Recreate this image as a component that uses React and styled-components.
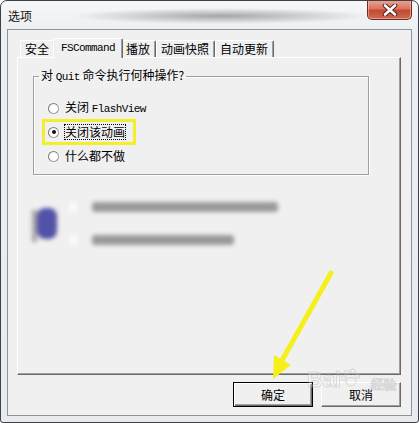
import React from "react";
import styled, { createGlobalStyle } from "styled-components";

const Global = createGlobalStyle`
  html, body { margin: 0; padding: 0; background: #ffffff; }
  body {
    font-family: "Noto Sans CJK SC", "Liberation Sans", sans-serif;
    font-size: 12px;
    color: #000;
  }
  * { box-sizing: border-box; }
`;

const Window = styled.div`
  position: relative;
  width: 419px;
  height: 423px;
  border: 1px solid #3d4046;
  border-radius: 7px 7px 3px 3px;
  overflow: hidden;
  display: flex;
  flex-direction: column;
  background:
    radial-gradient(ellipse 150px 8px at 220px 15px, rgba(140, 140, 140, 0.75), rgba(140, 140, 140, 0) 100%),
    linear-gradient(#f6f7f9 0%, #eceff2 30px, #e8ebee 100%);
`;

const TitleBar = styled.div`
  height: 28px;
  flex: none;
  display: flex;
  align-items: flex-start;
  justify-content: space-between;
  padding: 0 6px 0 7px;
`;

const Title = styled.div`
  margin-top: 8px;
  font-size: 12px;
  line-height: 14px;
  color: #111;
`;

const CloseButton = styled.div`
  margin-top: -1px;
  width: 45px;
  height: 20px;
  border: 1px solid #6e2b22;
  border-top: none;
  border-radius: 0 0 5px 5px;
  background: linear-gradient(#e9a796 0%, #d9755f 45%, #c24a33 55%, #cf6a52 100%);
  box-shadow: inset 0 0 0 1px rgba(255, 220, 210, 0.45);
  display: flex;
  align-items: center;
  justify-content: center;
`;

const Client = styled.div`
  flex: 1;
  margin: 0 6px 6px 6px;
  border: 1px solid #8f9398;
  background: #f0f0f0;
  display: flex;
  flex-direction: column;
  padding: 8px 10px 8px 9px;
`;

const TabStrip = styled.div`
  height: 19px;
  flex: none;
  display: flex;
  align-items: flex-end;
  padding-left: 3px;
  position: relative;
  z-index: 1;
`;

const Tab = styled.div`
  position: relative;
  height: ${(p) => (p.$active ? "20px" : "17px")};
  margin: ${(p) => (p.$active ? "0 -2px -1px -2px" : "0")};
  padding: ${(p) => (p.$active ? "3px 7px 0 7px" : "2px 5px 0 4px")};
  z-index: ${(p) => (p.$active ? 2 : 1)};
  background: #f0f0f0;
  border-top: 1px solid #ffffff;
  border-left: 1px solid #ffffff;
  border-right: 1px solid #696969;
  border-radius: 2px 2px 0 0;
  box-shadow: inset -1px 0 0 #a0a0a0;
  display: flex;
  align-items: flex-start;
  line-height: 12px;
  white-space: nowrap;
`;

const Mono = styled.span`
  font-family: "Liberation Mono", "DejaVu Sans Mono", monospace;
  font-size: 11px;
  letter-spacing: -0.6px;
`;

const Panel = styled.div`
  flex: 1;
  background: #f0f0f0;
  border-top: 1px solid #ffffff;
  border-left: 1px solid #ffffff;
  border-right: 1px solid #696969;
  border-bottom: 1px solid #696969;
  box-shadow: inset -1px -1px 0 #a0a0a0;
  display: flex;
  flex-direction: column;
  padding: 11px 31px 0 15px;
`;

const Group = styled.fieldset`
  margin: 0;
  padding: 0 0 6px 5px;
  border: 1px solid #a0a0a0;
  box-shadow: inset 1px 1px 0 #ffffff, 1px 1px 0 #ffffff;
  min-width: 0;
`;

const Legend = styled.legend`
  padding: 0 2px;
  line-height: 12px;
  font-size: 12px;
`;

const Options = styled.div`
  display: flex;
  flex-direction: column;
  padding: 13px 0 0 9px;
`;

const Option = styled.label`
  position: relative;
  height: 24px;
  display: flex;
  align-items: center;
  align-self: flex-start;
  gap: 5px;
  line-height: 12px;

  ${(p) =>
    p.$marked &&
    `
    &::after {
      content: "";
      position: absolute;
      top: -1px;
      bottom: -1px;
      left: -6px;
      right: -10px;
      border: 3px solid #f2ef2a;
      pointer-events: none;
    }
  `}
`;

const RadioDot = styled.span`
  width: 11px;
  height: 11px;
  border-radius: 50%;
  border: 1px solid #9c9c9c;
  border-top-color: #7e7e7e;
  border-left-color: #7e7e7e;
  background: radial-gradient(circle at 60% 60%, #ffffff 0%, #ffffff 50%, #e6e6e6 100%);
  box-shadow: 0 0 0 1px #f6f6f6;
  display: flex;
  align-items: center;
  justify-content: center;

  &::before {
    content: "";
    width: 4px;
    height: 4px;
    border-radius: 50%;
    background: ${(p) => (p.$checked ? "#111" : "transparent")};
  }
`;

const OptionText = styled.span`
  padding: 1px 0;
  border: 1px dotted ${(p) => (p.$focused ? "#000" : "transparent")};
  white-space: nowrap;
`;

/* obscured settings block under the group box */
const HiddenBlock = styled.div`
  margin-top: 20px;
  margin-left: -1px;
  height: 56px;
  display: flex;
  align-items: center;
  filter: blur(2px);
`;

const Handle = styled.div`
  width: 5px;
  height: 32px;
  margin-top: 6px;
  background: #a4a4a4;
`;

const Blob = styled.div`
  width: 20px;
  height: 31px;
  border-radius: 8px;
  background: #5252a8;
`;

const HiddenRows = styled.div`
  display: flex;
  flex-direction: column;
  gap: 23px;
  margin-left: 12px;
`;

const HiddenRow = styled.div`
  display: flex;
  align-items: center;
  gap: 15px;
`;

const HiddenBox = styled.div`
  width: 8px;
  height: 10px;
  background: #fafafa;
`;

const HiddenText = styled.div`
  width: ${(p) => p.$w}px;
  height: 10px;
  border-radius: 3px;
  background: #999999;
`;

const ButtonRow = styled.div`
  flex: none;
  margin-top: 7px;
  display: flex;
  justify-content: flex-end;
  gap: 8px;
`;

const Button = styled.div`
  width: 80px;
  height: 25px;
  display: flex;
  align-items: center;
  justify-content: center;
  background: #f0f0f0;
  line-height: 12px;
  ${(p) =>
    p.$default
      ? `
    border: 1px solid #000;
    box-shadow: inset 1px 1px 0 #ffffff, inset -1px -1px 0 #696969, inset -2px -2px 0 #a0a0a0;
  `
      : `
    border-top: 1px solid #ffffff;
    border-left: 1px solid #ffffff;
    border-right: 1px solid #696969;
    border-bottom: 1px solid #696969;
    box-shadow: inset -1px -1px 0 #a0a0a0;
  `}
`;

const Watermark = styled.div`
  position: absolute;
  left: 306px;
  top: 366px;
  display: flex;
  align-items: flex-end;
  pointer-events: none;
  opacity: 0.4;
`;

const WatermarkWord = styled.span`
  font-family: "Liberation Sans", sans-serif;
  font-weight: bold;
  font-size: ${(p) => p.$size}px;
  margin-left: ${(p) => p.$gap || 0}px;
  line-height: 1;
  color: rgba(255, 255, 255, 0.7);
  -webkit-text-stroke: 1px #b5b5b5;
`;

const Overlay = styled.svg`
  position: absolute;
  left: -1px;
  top: -1px;
  pointer-events: none;
`;

function CloseGlyph() {
  return (
    <svg width="16" height="12" viewBox="0 0 16 12">
      <path d="M3 1.5 L13 10.5 M13 1.5 L3 10.5" stroke="#5a1e16" strokeWidth="4.6" strokeLinecap="round" />
      <path d="M3 1.5 L13 10.5 M13 1.5 L3 10.5" stroke="#ffffff" strokeWidth="2.6" strokeLinecap="round" />
    </svg>
  );
}

function Paw() {
  return (
    <svg width="20" height="24" viewBox="0 0 22 24">
      <g fill="none" stroke="#b5b5b5" strokeWidth="1.3">
        <circle cx="6" cy="5" r="2.6" />
        <circle cx="13" cy="3.5" r="2.6" />
        <circle cx="3" cy="11" r="2.4" />
        <circle cx="18" cy="9" r="2.4" />
        <ellipse cx="11" cy="15" rx="5.5" ry="4.5" />
      </g>
    </svg>
  );
}

const tabs = [
  { key: "safe", label: "安全" },
  { key: "fs", label: <Mono>FSCommand</Mono>, active: true },
  { key: "play", label: "播放" },
  { key: "snap", label: "动画快照" },
  { key: "update", label: "自动更新" },
];

export default function App() {
  return (
    <>
      <Global />
      <Window>
        <TitleBar>
          <Title>选项</Title>
          <CloseButton>
            <CloseGlyph />
          </CloseButton>
        </TitleBar>
        <Client>
          <TabStrip>
            {tabs.map((t) => (
              <Tab key={t.key} $active={t.active}>
                {t.label}
              </Tab>
            ))}
          </TabStrip>
          <Panel>
            <Group>
              <Legend>
                对 <Mono>Quit</Mono> 命令执行何种操作?
              </Legend>
              <Options>
                <Option>
                  <RadioDot />
                  <OptionText>
                    关闭 <Mono>FlashView</Mono>
                  </OptionText>
                </Option>
                <Option $marked>
                  <RadioDot $checked />
                  <OptionText $focused>关闭该动画</OptionText>
                </Option>
                <Option>
                  <RadioDot />
                  <OptionText>什么都不做</OptionText>
                </Option>
              </Options>
            </Group>
            <HiddenBlock>
              <Handle />
              <Blob />
              <HiddenRows>
                <HiddenRow>
                  <HiddenBox />
                  <HiddenText $w={186} />
                </HiddenRow>
                <HiddenRow>
                  <HiddenBox />
                  <HiddenText $w={142} />
                </HiddenRow>
              </HiddenRows>
            </HiddenBlock>
          </Panel>
          <ButtonRow>
            <Button $default>确定</Button>
            <Button>取消</Button>
          </ButtonRow>
        </Client>
        <Watermark>
          <WatermarkWord $size={22}>Bai</WatermarkWord>
          <Paw />
          <WatermarkWord $size={13} $gap={10}>经验</WatermarkWord>
        </Watermark>
        <Overlay width="419" height="423" viewBox="0 0 419 423">
          <line x1="331" y1="273" x2="280" y2="364" stroke="#f5ef1c" strokeWidth="5" strokeLinecap="round" />
          <polygon points="273,379 274,355 291,365" fill="#f5ef1c" />
        </Overlay>
      </Window>
    </>
  );
}
